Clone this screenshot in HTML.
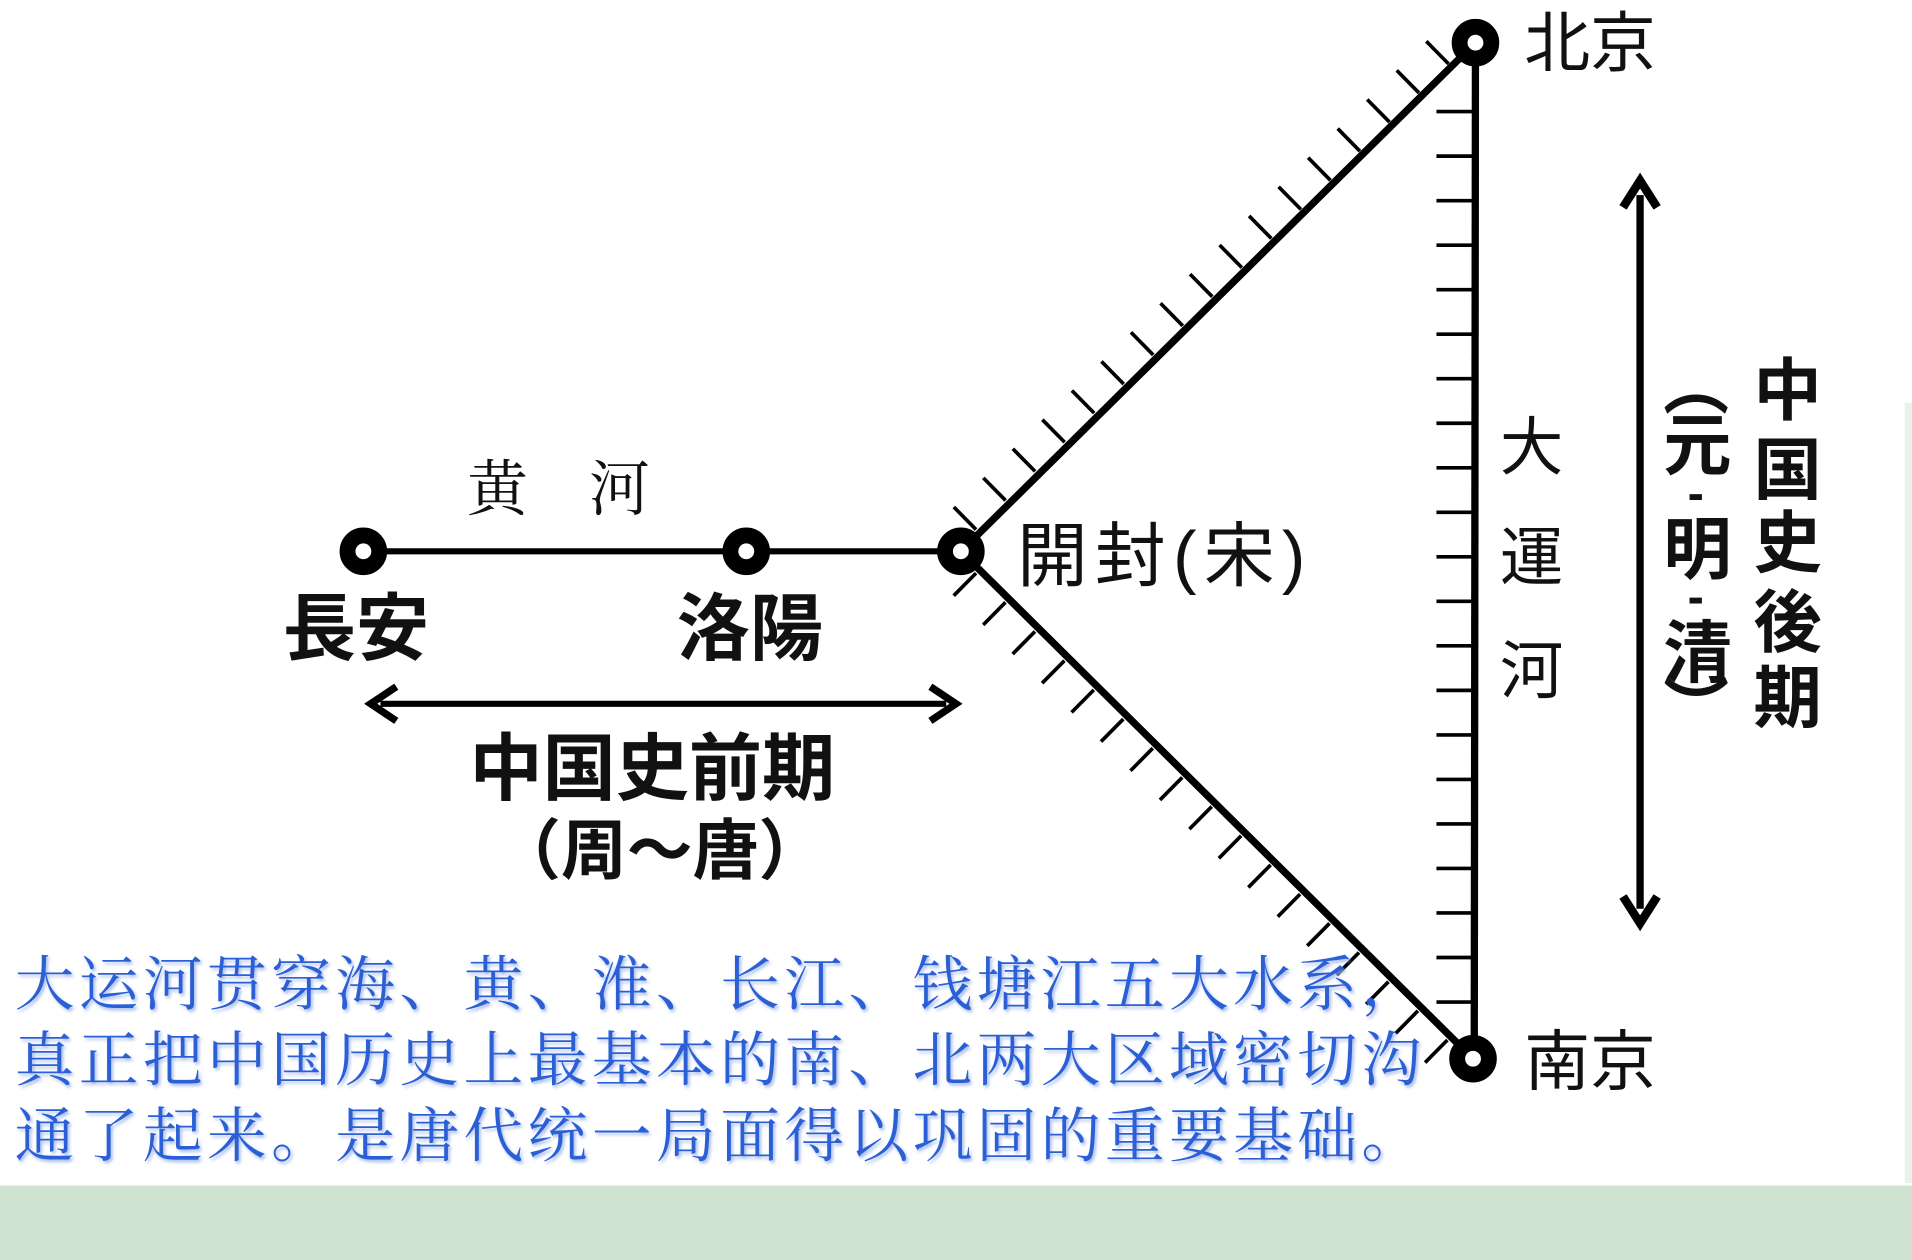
<!DOCTYPE html>
<html><head><meta charset="utf-8"><style>
html,body{margin:0;padding:0;background:#fff;width:1912px;height:1260px;overflow:hidden}
svg{display:block}
.k{font-family:"Liberation Sans","Noto Sans CJK JP",sans-serif;fill:#111}
.b{font-family:"Liberation Serif","Noto Serif CJK SC",serif;fill:#2a5fd6;font-size:49px;letter-spacing:3.6px}
</style></head><body>
<svg width="1912" height="1260" viewBox="0 0 1568 1033" preserveAspectRatio="none">
<defs><filter id="sh"><feDropShadow dx="1.5" dy="2" stdDeviation="1.2" flood-color="#9bb4e8" flood-opacity="0.9"/></filter></defs>
<rect x="0" y="972" width="1568" height="61" fill="#d0e2d0"/>
<rect x="1562" y="330" width="6" height="640" fill="#e8f2e8"/>
<g stroke="#000" fill="none" stroke-linecap="butt">
<line x1="298" y1="452" x2="788" y2="452" stroke-width="5"/>
<line x1="788" y1="452" x2="1210" y2="35" stroke-width="6"/>
<line x1="788" y1="452" x2="1208" y2="868" stroke-width="6"/>
<line x1="1210" y1="35" x2="1209" y2="868" stroke-width="6"/>
<line x1="776" y1="440" x2="1186" y2="36" stroke-width="26" stroke-dasharray="3 31" stroke-dashoffset="-20"/>
<line x1="776" y1="464" x2="1182" y2="866" stroke-width="26" stroke-dasharray="3 31" stroke-dashoffset="-20"/>
<line x1="1193" y1="90" x2="1193" y2="850" stroke-width="30" stroke-dasharray="3 33.5"/>
<line x1="312" y1="577" x2="776" y2="577" stroke-width="5"/>
<polyline points="325,563 304,577 325,591" stroke-width="6"/>
<polyline points="763,563 784,577 763,591" stroke-width="6"/>
<line x1="1345" y1="160" x2="1345" y2="745" stroke-width="6"/>
<polyline points="1331,170 1345,148 1359,170" stroke-width="7"/>
<polyline points="1331,735 1345,757 1359,735" stroke-width="7"/>
</g>
<g fill="#fff" stroke="#000" stroke-width="13">
<circle cx="1210" cy="35" r="13"/><circle cx="788" cy="452" r="13"/><circle cx="1208" cy="868" r="13"/>
<circle cx="298" cy="452" r="13"/><circle cx="612" cy="452" r="13"/>
</g>
<g class="k">
<text x="1250" y="54" font-size="54">北京</text>
<text x="1250" y="889" font-size="54">南京</text>
<text x="383" y="418" font-size="50" style="font-family:'Liberation Serif','Noto Serif CJK JP',serif">黄　河</text>
<text x="232" y="536" font-size="60" font-weight="bold">長安</text>
<text x="555" y="536" font-size="60" font-weight="bold">洛陽</text>
<text x="834" y="476" font-size="58" letter-spacing="6">開封(宋)</text>
<text x="385" y="651" font-size="60" font-weight="bold">中国史前期</text>
<text x="406" y="716" font-size="54" font-weight="bold">（周～唐）</text>
<text x="1230" y="385" font-size="52">大</text>
<text x="1230" y="475" font-size="52">運</text>
<text x="1230" y="568" font-size="52">河</text>
<g font-size="56" font-weight="bold">
<text x="1438" y="340">中</text><text x="1438" y="405">国</text><text x="1438" y="465">史</text><text x="1438" y="530">後</text><text x="1438" y="592">期</text>
<text x="1364" y="335" font-size="54">︵</text>
<text x="1364" y="385">元</text><text x="1384" y="418" font-size="40">-</text>
<text x="1364" y="470">明</text><text x="1384" y="503" font-size="40">-</text>
<text x="1364" y="555">清</text>
<text x="1364" y="600" font-size="54">︶</text>
</g>
</g>
<g class="b" filter="url(#sh)">
<text x="12" y="824">大运河贯穿海、黄、淮、长江、钱塘江五大水系，</text>
<text x="12" y="886">真正把中国历史上最基本的南、北两大区域密切沟</text>
<text x="12" y="948">通了起来。是唐代统一局面得以巩固的重要基础。</text>
</g>
</svg>
</body></html>
